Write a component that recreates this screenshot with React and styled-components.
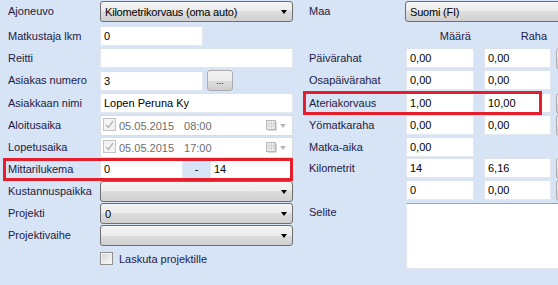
import React from 'react';
import styled, { createGlobalStyle } from 'styled-components';

const Global = createGlobalStyle`
  html, body { margin: 0; padding: 0; background: #d7e4f5; }
  body { font-family: "Liberation Sans", Arial, sans-serif; font-size: 11px; }
`;

const Page = styled.div`
  width: 558px;
  height: 285px;
  overflow: hidden;
  display: flex;
  background: #d7e4f5;
  font-family: "Liberation Sans", Arial, sans-serif;
  font-size: 11px;
`;

const Column = styled.div`
  width: ${p => p.$w}px;
  flex: none;
  display: flex;
  flex-direction: column;
`;

const Row = styled.div`
  position: relative;
  display: flex;
  align-items: ${p => p.$align || 'center'};
  height: ${p => p.$h || 20}px;
  margin-top: ${p => p.$mt || 0}px;
  flex: none;
`;

const Label = styled.div`
  width: ${p => p.$w}px;
  padding-left: ${p => p.$pl}px;
  padding-top: ${p => p.$pt || 0}px;
  box-sizing: border-box;
  flex: none;
  white-space: nowrap;
  line-height: 13px;
  color: #231a46;
`;

const TextBox = styled.div`
  width: ${p => p.$w}px;
  height: ${p => p.$h || 20}px;
  box-sizing: border-box;
  flex: none;
  display: flex;
  align-items: ${p => (p.$multi ? 'flex-start' : 'center')};
  padding: 0 3px;
  background: #ffffff;
  border: 1px solid #e3e8ee;
  border-top-color: ${p => (p.$multi ? '#a3a3a3' : '#dde3ea')};
  color: #000;
  white-space: nowrap;
  margin-left: ${p => p.$ml || 0}px;
`;

const Select = styled.div`
  position: relative;
  width: ${p => p.$w}px;
  height: 21px;
  box-sizing: border-box;
  flex: none;
  display: flex;
  align-items: center;
  padding-left: 4px;
  border: 1px solid #707070;
  border-radius: 3px;
  background: linear-gradient(#f3f3f3 0%, #ebebeb 50%, #dddddd 50%, #d0d0d0 100%);
  color: #000;
  white-space: nowrap;
  letter-spacing: -0.2px;
`;

const Arrow = styled.span`
  position: absolute;
  right: 5px;
  top: 8px;
  width: 0;
  height: 0;
  border-left: 3.5px solid transparent;
  border-right: 3.5px solid transparent;
  border-top: 4px solid #000;
`;

const DatePicker = styled.div`
  width: 193px;
  height: 21px;
  box-sizing: border-box;
  flex: none;
  display: flex;
  align-items: center;
  padding: 0 6px 0 2px;
  background: #fff;
  border: 1px solid #d9dde2;
  color: #6d6d6d;
  white-space: nowrap;
`;

const DisabledCheck = styled.span`
  width: 13px;
  height: 13px;
  box-sizing: border-box;
  flex: none;
  border: 1px solid #c3c3c3;
  background: #f4f4f4;
  display: flex;
  align-items: center;
  justify-content: center;
  margin-right: 3px;
  margin-top: -2px;
`;

const TimeText = styled.span`
  margin-left: ${p => p.$ml || 0}px;
`;

const CalendarGroup = styled.span`
  margin-left: auto;
  display: flex;
  align-items: center;
  gap: 3px;
`;

const SmallArrow = styled.span`
  width: 0;
  height: 0;
  border-left: 3.5px solid transparent;
  border-right: 3.5px solid transparent;
  border-top: 4px solid #b8b8b8;
`;

const Button = styled.div`
  width: ${p => p.$w || 26}px;
  height: 21px;
  box-sizing: border-box;
  flex: none;
  margin-left: ${p => p.$ml || 0}px;
  border: 1px solid #acacac;
  border-radius: 3px;
  background: linear-gradient(#f2f2f2 0%, #ebebeb 50%, #dddddd 50%, #cfcfcf 100%);
  display: flex;
  align-items: flex-end;
  justify-content: center;
  padding-bottom: 4px;
  font-size: 9px;
  line-height: 9px;
  color: #000;
`;

const Dash = styled.div`
  width: 27px;
  flex: none;
  text-align: center;
  color: #000;
`;

const CheckBox = styled.span`
  width: 13px;
  height: 13px;
  box-sizing: border-box;
  flex: none;
  border: 1px solid #8f8f8f;
  box-shadow: inset 0 0 0 1px #f4f4f4;
  background: linear-gradient(135deg, #d6d6d6, #f8f8f8);
  margin-right: 6px;
`;

const CheckLabel = styled.span`
  color: #231a46;
`;

const HeaderCell = styled.div`
  width: ${p => p.$w}px;
  flex: none;
  box-sizing: border-box;
  text-align: right;
  padding-right: ${p => p.$pr}px;
  margin-left: ${p => p.$ml || 0}px;
  color: #231a46;
  line-height: 13px;
`;

const Highlight = styled.div`
  position: absolute;
  left: ${p => p.$l}px;
  top: ${p => p.$t}px;
  width: ${p => p.$w}px;
  height: ${p => p.$h}px;
  box-sizing: border-box;
  border: 3px solid #e61e2b;
  pointer-events: none;
`;

const CalendarIcon = () => (
  <svg width="11" height="11" viewBox="0 0 11 11">
    <rect x="0.5" y="0.5" width="9" height="9" fill="#f3f3f3" stroke="#b9b9b9" />
    <path d="M3 1v8M5.5 1v8M8 1v8M1 3.5h8M1 6h8" stroke="#d2d2d2" strokeWidth="1" />
    <path d="M2 10.5h8.5V2" stroke="#d8d8d8" fill="none" />
  </svg>
);

const CheckMark = () => (
  <svg width="9" height="9" viewBox="0 0 9 9">
    <path d="M1 5l2.5 2.5L8 1" stroke="#b5b5b5" strokeWidth="1.4" fill="none" />
  </svg>
);

function DateField({ date, time }) {
  return (
    <DatePicker>
      <DisabledCheck>
        <CheckMark />
      </DisabledCheck>
      <TimeText>{date}</TimeText>
      <TimeText $ml={10}>{time}</TimeText>
      <CalendarGroup>
        <CalendarIcon />
        <SmallArrow />
      </CalendarGroup>
    </DatePicker>
  );
}

const L = 100;
const R = 106;

export default function App() {
  return (
    <>
      <Global />
      <Page>
        <Column $w={300}>
          <Row $mt={1} $h={21}>
            <Label $w={L} $pl={8}>Ajoneuvo</Label>
            <Select $w={193}>Kilometrikorvaus (oma auto)<Arrow /></Select>
          </Row>
          <Row $mt={4}>
            <Label $w={L} $pl={8}>Matkustaja lkm</Label>
            <TextBox $w={103}>0</TextBox>
          </Row>
          <Row $mt={2}>
            <Label $w={L} $pl={8}>Reitti</Label>
            <TextBox $w={193} />
          </Row>
          <Row $mt={2} $h={21}>
            <Label $w={L} $pl={8}>Asiakas numero</Label>
            <TextBox $w={103}>3</TextBox>
            <Button $ml={4}>...</Button>
          </Row>
          <Row $mt={2}>
            <Label $w={L} $pl={8}>Asiakkaan nimi</Label>
            <TextBox $w={193}>Lopen Peruna Ky</TextBox>
          </Row>
          <Row $mt={2} $h={21}>
            <Label $w={L} $pl={8}>Aloitusaika</Label>
            <DateField date="05.05.2015" time="08:00" />
          </Row>
          <Row $mt={1} $h={21}>
            <Label $w={L} $pl={8}>Lopetusaika</Label>
            <DateField date="05.05.2015" time="17:00" />
          </Row>
          <Row $mt={1}>
            <Label $w={L} $pl={8}>Mittarilukema</Label>
            <TextBox $w={83}>0</TextBox>
            <Dash>-</Dash>
            <TextBox $w={83}>14</TextBox>
            <Highlight $l={3} $t={-1} $w={290} $h={23} />
          </Row>
          <Row $mt={2} $h={21}>
            <Label $w={L} $pl={8}>Kustannuspaikka</Label>
            <Select $w={193}><Arrow /></Select>
          </Row>
          <Row $mt={1} $h={21}>
            <Label $w={L} $pl={8}>Projekti</Label>
            <Select $w={193}>0<Arrow /></Select>
          </Row>
          <Row $mt={1} $h={21}>
            <Label $w={L} $pl={8}>Projektivaihe</Label>
            <Select $w={193}><Arrow /></Select>
          </Row>
          <Row $mt={6} $h={13}>
            <Label $w={L} $pl={8} />
            <CheckBox />
            <CheckLabel>Laskuta projektille</CheckLabel>
          </Row>
        </Column>

        <Column $w={258}>
          <Row $mt={1} $h={21}>
            <Label $w={105} $pl={9}>Maa</Label>
            <Select $w={200}>Suomi (FI)</Select>
          </Row>
          <Row $mt={4}>
            <Label $w={R} $pl={9} />
            <HeaderCell $w={68} $pr={3}>Määrä</HeaderCell>
            <HeaderCell $w={67} $pr={4} $ml={10}>Raha</HeaderCell>
          </Row>
          <Row $mt={2}>
            <Label $w={R} $pl={9}>Päivärahat</Label>
            <TextBox $w={68}>0,00</TextBox>
            <TextBox $w={67} $ml={10}>0,00</TextBox>
            <Button $ml={5} $w={25} />
          </Row>
          <Row $mt={2}>
            <Label $w={R} $pl={9}>Osapäivärahat</Label>
            <TextBox $w={68}>0,00</TextBox>
            <TextBox $w={67} $ml={10}>0,00</TextBox>
          </Row>
          <Row $mt={3}>
            <Label $w={R} $pl={9}>Ateriakorvaus</Label>
            <TextBox $w={68}>1,00</TextBox>
            <TextBox $w={67} $ml={10}>10,00</TextBox>
            <Button $ml={5} $w={25} />
            <Highlight $l={3} $t={-2} $w={239} $h={24} />
          </Row>
          <Row $mt={2}>
            <Label $w={R} $pl={9}>Yömatkaraha</Label>
            <TextBox $w={68}>0,00</TextBox>
            <TextBox $w={67} $ml={10}>0,00</TextBox>
            <Button $ml={5} $w={25} />
          </Row>
          <Row $mt={2}>
            <Label $w={R} $pl={9}>Matka-aika</Label>
            <TextBox $w={68}>0,00</TextBox>
          </Row>
          <Row $mt={1}>
            <Label $w={R} $pl={9}>Kilometrit</Label>
            <TextBox $w={68}>14</TextBox>
            <TextBox $w={67} $ml={10}>6,16</TextBox>
            <Button $ml={5} $w={25} />
          </Row>
          <Row $mt={2}>
            <Label $w={R} $pl={9} />
            <TextBox $w={68}>0</TextBox>
            <TextBox $w={67} $ml={10}>0,00</TextBox>
            <Button $ml={5} $w={25} />
          </Row>
          <Row $mt={3} $h={66} $align="flex-start">
            <Label $w={R} $pl={9} $pt={3}>Selite</Label>
            <TextBox $w={200} $h={66} $multi />
          </Row>
        </Column>
      </Page>
    </>
  );
}
